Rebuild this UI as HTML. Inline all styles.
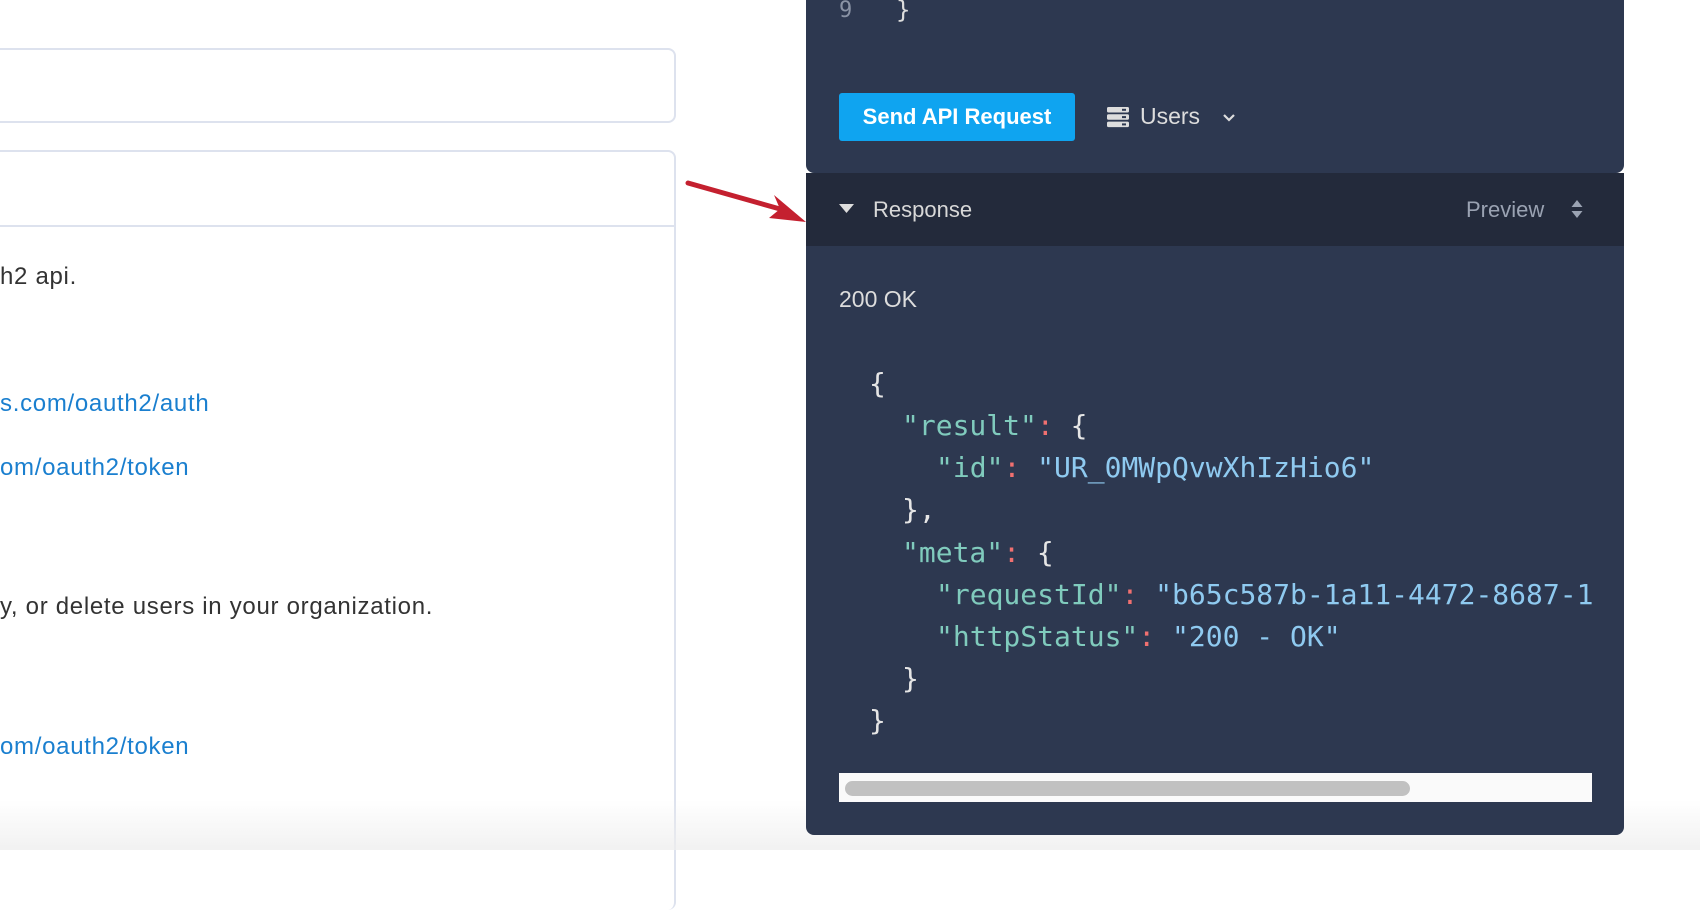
<!DOCTYPE html>
<html><head><meta charset="utf-8"><style>
*{margin:0;padding:0;box-sizing:border-box}
body{width:1700px;height:850px;overflow:hidden;background:#fff;position:relative;font-family:"Liberation Sans",sans-serif}
.box{position:absolute;left:-10px;width:686px;border:2px solid #dde2ee;border-radius:8px;background:#fff}
.t{position:absolute;left:0;font-size:24px;letter-spacing:0.7px;color:#333;white-space:nowrap}
.l{color:#1a7fcf}
.panel{position:absolute;left:806px;width:818px;background:#2d3850}
.mono{font-family:"DejaVu Sans Mono","Liberation Mono",monospace}
.k{color:#80cbbd}.c{color:#f07070}.v{color:#8fcaf0}.b{color:#e6e6e6}
.json div{position:absolute;white-space:nowrap;font-size:28px}
</style></head><body>
<div class="box" style="top:48px;height:75px"></div>
<div class="box" style="top:150px;height:760px;border-bottom:none"><div style="position:absolute;top:73px;left:0;right:0;border-top:2px solid #dde2ee"></div></div>
<div class="t" style="top:263px;left:0">h2 api.</div>
<div class="t l" style="top:390px">s.com/oauth2/auth</div>
<div class="t l" style="top:454px">om/oauth2/token</div>
<div class="t" style="top:593px">y, or delete users in your organization.</div>
<div class="t l" style="top:733px">om/oauth2/token</div>
<div style="position:absolute;left:0;right:0;top:800px;height:50px;background:linear-gradient(rgba(245,245,245,0),rgba(238,238,238,0.8))"></div>

<div class="panel" style="top:-10px;height:183px;border-radius:0 0 8px 8px">
<div class="mono" style="position:absolute;left:33px;top:8px;font-size:22px;color:#8a93a5">9</div>
<div class="mono" style="position:absolute;left:90px;top:6px;font-size:24px;color:#ddd">}</div>
<div style="position:absolute;left:33px;top:103px;width:236px;height:48px;background:#0fa4f0;border-radius:3px;color:#fff;font-weight:bold;font-size:22px;line-height:48px;text-align:center">Send API Request</div>
<svg style="position:absolute;left:301px;top:116px" width="22" height="22" viewBox="0 0 22 22"><rect x="0" y="1" width="22" height="5.5" rx="1.5" fill="#ddd"/><rect x="0" y="8.3" width="22" height="5.5" rx="1.5" fill="#ddd"/><rect x="0" y="15.6" width="22" height="5.5" rx="1.5" fill="#ddd"/><rect x="15" y="2.8" width="4" height="2" fill="#2d3850"/><rect x="15" y="10.1" width="4" height="2" fill="#2d3850"/><rect x="15" y="17.4" width="4" height="2" fill="#2d3850"/></svg>
<div style="position:absolute;left:334px;top:113px;font-size:23px;color:#ddd">Users</div>
<svg style="position:absolute;left:416px;top:123px" width="14" height="10" viewBox="0 0 14 10"><path d="M2 2l5 5 5-5" stroke="#ddd" stroke-width="2.2" fill="none"/></svg>
</div>
<div style="position:absolute;left:806px;top:173px;width:818px;height:73px;background:#232a3b">
<svg style="position:absolute;left:33px;top:31px" width="15" height="10"><path d="M0 0h15L7.5 9z" fill="#ddd"/></svg>
<div style="position:absolute;left:67px;top:24px;font-size:22px;color:#d8d8d8">Response</div>
<div style="position:absolute;left:660px;top:24px;font-size:22px;color:#9aa2b2">Preview</div>
<svg style="position:absolute;left:765px;top:27px" width="12" height="18"><path d="M6 0l5.5 7h-11zM6 18l5.5-7h-11z" fill="#9aa2b2"/></svg>
</div>
<div class="panel" style="top:246px;height:589px;border-radius:0 0 8px 8px">
<div style="position:absolute;left:33px;top:40px;font-size:23px;color:#ddd">200 OK</div>
<div class="json mono" style="position:absolute;left:33px;top:0;width:753px;height:500px;overflow:hidden">
<div style="left:30px;top:121px"><span class="b">{</span></div>
<div style="left:63px;top:163px"><span class="k">"result"</span><span class="c">:</span> <span class="b">{</span></div>
<div style="left:97px;top:205px"><span class="k">"id"</span><span class="c">:</span> <span class="v">"UR_0MWpQvwXhIzHio6"</span></div>
<div style="left:63px;top:247px"><span class="b">},</span></div>
<div style="left:63px;top:290px"><span class="k">"meta"</span><span class="c">:</span> <span class="b">{</span></div>
<div style="left:97px;top:332px"><span class="k">"requestId"</span><span class="c">:</span> <span class="v">"b65c587b-1a11-4472-8687-1a2b3c4d5e6f"</span></div>
<div style="left:97px;top:374px"><span class="k">"httpStatus"</span><span class="c">:</span> <span class="v">"200 - OK"</span></div>
<div style="left:63px;top:416px"><span class="b">}</span></div>
<div style="left:30px;top:458px"><span class="b">}</span></div>
</div>
<div style="position:absolute;left:33px;top:527px;width:753px;height:29px;background:#fafafa"><div style="position:absolute;left:6px;top:8px;width:565px;height:15px;border-radius:8px;background:#c1c1c1"></div></div>
</div>
<svg style="position:absolute;left:680px;top:175px" width="130" height="60"><path d="M8 8L100 34" stroke="#c4202f" stroke-width="5" stroke-linecap="round"/><path d="M126 47L94 20 100 34 89 43z" fill="#c4202f"/></svg>
</body></html>
